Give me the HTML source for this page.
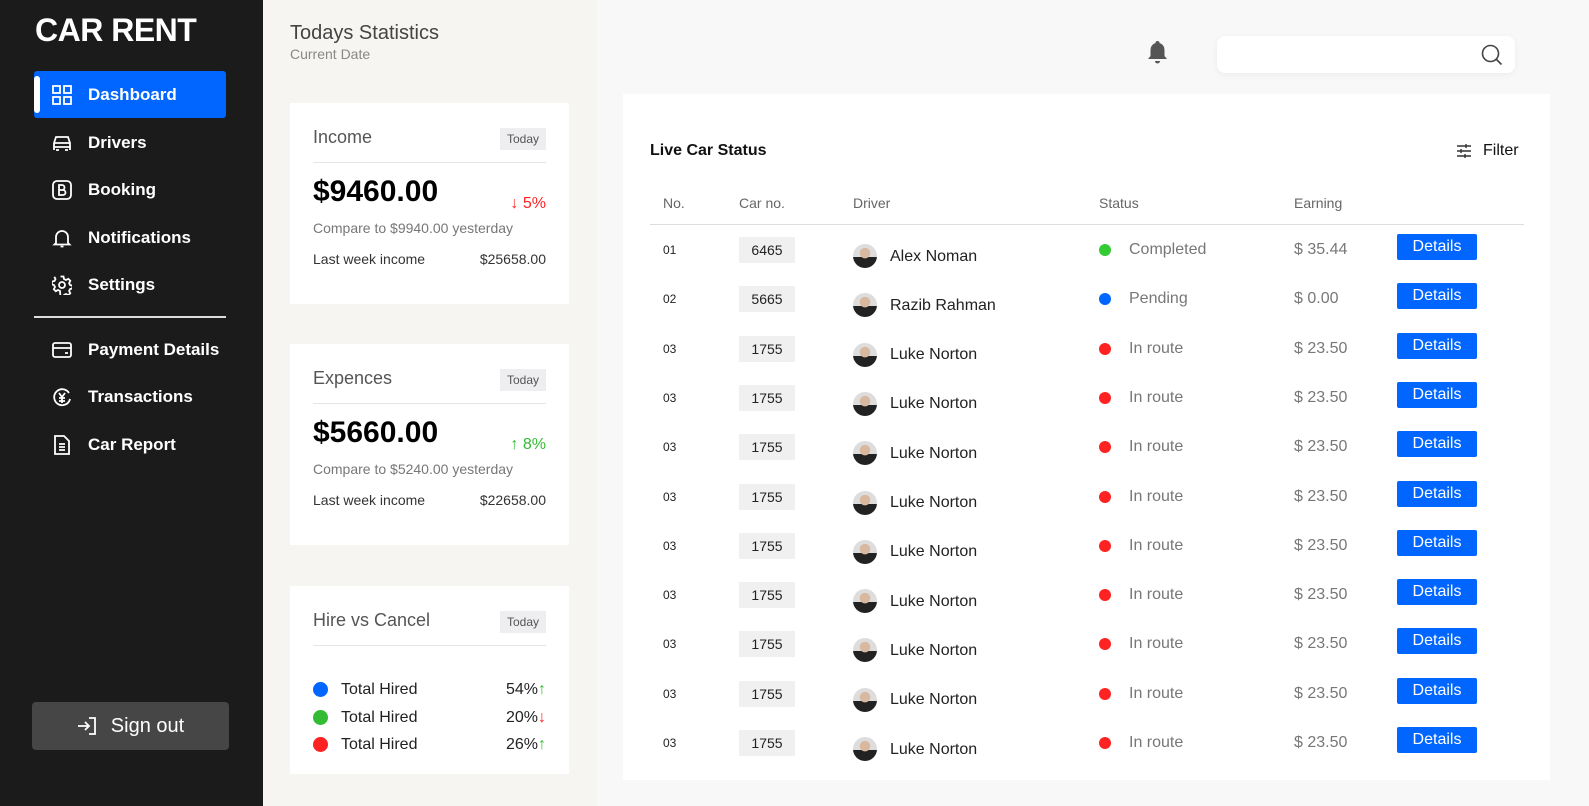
<!DOCTYPE html><html><head><meta charset="utf-8"><style>
*{margin:0;padding:0;box-sizing:border-box}
body{width:1589px;height:806px;overflow:hidden;font-family:"Liberation Sans",sans-serif;background:#f8f8f8;position:relative}
.sb{position:absolute;left:0;top:0;width:263px;height:806px;background:#1b1b1b;color:#fff}
.logo{position:absolute;left:35px;top:12px;font-size:32px;font-weight:bold;letter-spacing:-0.5px}
.nav{position:absolute;left:34px;width:192px;height:47px;font-size:17px;font-weight:bold;display:flex;align-items:center;padding-left:18px}
.nav svg{width:20px;height:20px;margin-right:16px;fill:none;stroke:#fff;stroke-width:1.8}
.act{background:#0066ff;border-radius:3px}
.act:before{content:"";position:absolute;left:0;top:5px;width:6px;height:37px;background:#fff;border-radius:3px}
.mid{position:absolute;left:263px;top:0;width:334px;height:806px;background:#f6f5f1}
.card{position:absolute;left:290px;width:279px;background:#fff;padding:0 23px}
.ct{font-size:18px;color:#555;position:absolute;left:23px;top:24px}
.tag{position:absolute;right:23px;top:25px;background:#eeeef0;color:#555;font-size:12px;padding:4px 7px}
.hr{position:absolute;left:23px;right:23px;top:59px;border-top:1px solid #e5e5e5}
.big{position:absolute;left:23px;top:72px;font-size:30px;font-weight:bold}
.cmp{position:absolute;left:23px;top:117px;font-size:14px;color:#777}
.lw{position:absolute;left:23px;right:23px;top:148px;font-size:14px;color:#333;display:flex;justify-content:space-between}
.pct{position:absolute;right:23px;top:92px;font-size:16px}
.main{position:absolute;left:623px;top:94px;width:927px;height:686px;background:#fff}
.row{position:absolute;left:0;width:927px;height:30px;font-size:16px;color:#222}
.row>*{position:absolute;top:50%;transform:translateY(-50%)}
.cn{left:116px;background:#f0f0f0;font-size:14px;padding:5px 0;width:56px;text-align:center}
.av{left:230px;width:24px;height:24px;border-radius:50%;background:radial-gradient(circle at 50% 38%,#d9b8a0 0 5px,transparent 5.5px),linear-gradient(#ddd 55%,#222 55%)}
.dot{left:476px;width:12px;height:12px;border-radius:50%}
.btn{left:774px;background:#0066ff;color:#fff;width:80px;height:26px;border-radius:2px;text-align:center;line-height:26px;font-size:16px}
</style></head><body>
<div class="sb">
<div class="logo">CAR RENT</div>
<div class="nav act" style="top:71px"><svg viewBox="0 0 20 20"><rect x="1" y="1" width="7" height="7"/><rect x="12" y="1" width="7" height="7"/><rect x="1" y="12" width="7" height="7"/><rect x="12" y="12" width="7" height="7"/></svg>Dashboard</div>
<div class="nav" style="top:119px"><svg viewBox="0 0 20 20"><path d="M2 17v-7l2-6h12l2 6v7M2 14h16M2 10h16M4 17h3M13 17h3"/></svg>Drivers</div>
<div class="nav" style="top:166px"><svg viewBox="0 0 20 20"><rect x="1" y="1" width="18" height="18" rx="4"/><path d="M7 5v10h4a2.5 2.5 0 0 0 0-5H7h3a2.5 2.5 0 0 0 0-5z"/></svg>Booking</div>
<div class="nav" style="top:214px"><svg viewBox="0 0 20 20"><path d="M4 15V9a6 6 0 0 1 12 0v6l1.5 1.5h-15zM8.5 18.5h3"/></svg>Notifications</div>
<div class="nav" style="top:261px"><svg viewBox="0 0 20 20"><circle cx="10" cy="10" r="3"/><path d="M8.5 1.5h3l.5 2.5 2 1 2.3-1.2 2 2-1.2 2.3 1 2 2.4.4v3l-2.4.5-1 2 1.2 2.2-2 2-2.3-1.2-2 1-.5 2.5h-3L8 16l-2-1-2.2 1.2-2-2L3 12l-1-2-2-.5v-3L2.5 6l1-2L2.3 1.8"/></svg>Settings</div>
<div style="position:absolute;left:34px;top:316px;width:192px;border-top:2px solid #ddd"></div>
<div class="nav" style="top:326px"><svg viewBox="0 0 20 20"><rect x="1" y="3" width="18" height="14" rx="2"/><path d="M1 8h18M13 13h3"/></svg>Payment Details</div>
<div class="nav" style="top:373px"><svg viewBox="0 0 20 20"><path d="M17 6a8 8 0 1 0 1 6M7 6l3 4 3-4M10 10v6M7 11h6M7 14h6"/></svg>Transactions</div>
<div class="nav" style="top:421px"><svg viewBox="0 0 20 20"><path d="M3 1h9l5 5v13H3zM7 9h6M7 12h6M7 15h6"/></svg>Car Report</div>
<div style="position:absolute;left:32px;top:702px;width:197px;height:48px;background:#464646;border-radius:4px;font-size:20px;display:flex;align-items:center;justify-content:center;color:#fff"><svg viewBox="0 0 20 20" width="20" height="20" style="margin-right:14px;fill:none;stroke:#fff;stroke-width:1.8"><path d="M1 10h11M8 6l4 4-4 4M12 2h6v16h-6"/></svg>Sign out</div>
</div>
<div class="mid"></div>
<div style="position:absolute;left:290px;top:22px;font-size:20px;color:#444">Todays Statistics</div>
<div style="position:absolute;left:290px;top:46px;font-size:14px;color:#888">Current Date</div>

<div class="card" style="top:103px;height:201px"><div class="ct">Income</div><div class="tag">Today</div><div class="hr"></div><div class="big">$9460.00</div><div class="pct" style="color:#f22">↓ 5%</div><div class="cmp">Compare to $9940.00 yesterday</div><div class="lw"><span>Last week income</span><span>$25658.00</span></div></div>
<div class="card" style="top:344px;height:201px"><div class="ct">Expences</div><div class="tag">Today</div><div class="hr"></div><div class="big">$5660.00</div><div class="pct" style="color:#3b3">↑ 8%</div><div class="cmp">Compare to $5240.00 yesterday</div><div class="lw"><span>Last week income</span><span>$22658.00</span></div></div>
<div class="card" style="top:586px;height:188px"><div class="ct">Hire vs Cancel</div><div class="tag">Today</div><div class="hr"></div>
<div style="position:absolute;left:23px;right:23px;top:90px;font-size:16px;color:#222;line-height:27.5px">
<div style="display:flex;align-items:center"><span style="width:15px;height:15px;border-radius:50%;background:#0066ff;margin-right:13px"></span>Total Hired<span style="margin-left:auto">54%<b style="color:#3b3;font-weight:normal">↑</b></span></div>
<div style="display:flex;align-items:center"><span style="width:15px;height:15px;border-radius:50%;background:#3b3;margin-right:13px"></span>Total Hired<span style="margin-left:auto">20%<b style="color:#f22;font-weight:normal">↓</b></span></div>
<div style="display:flex;align-items:center"><span style="width:15px;height:15px;border-radius:50%;background:#f22;margin-right:13px"></span>Total Hired<span style="margin-left:auto">26%<b style="color:#3b3;font-weight:normal">↑</b></span></div>
</div></div>

<svg style="position:absolute;left:1146px;top:40px" width="23" height="24" viewBox="0 0 23 24"><path d="M11.5 1a2 2 0 0 1 2 2a7 7 0 0 1 5 7v6l2.5 3H2l2.5-3v-6a7 7 0 0 1 5-7a2 2 0 0 1 2-2zM9 21h5a2.5 2.5 0 0 1-5 0z" fill="#555"/></svg>
<div style="position:absolute;left:1217px;top:36px;width:298px;height:37px;background:#fff;border-radius:8px;box-shadow:0 2px 8px rgba(0,0,0,.05)"><svg style="position:absolute;right:12px;top:8px" width="22" height="22" viewBox="0 0 22 22" fill="none" stroke="#444" stroke-width="1.6"><circle cx="9.5" cy="9.5" r="8"/><path d="M15.5 15.5l5 5"/></svg></div>

<div class="main">
<div style="position:absolute;left:27px;top:48px;font-size:16px;font-weight:bold;color:#111">Live Car Status</div>
<svg style="position:absolute;left:833px;top:49px" width="16" height="16" viewBox="0 0 16 16" fill="none" stroke="#333" stroke-width="1.4"><path d="M1 3h14M1 8h14M1 13h14M10 1v4M5 6v4M9 11v4"/></svg>
<div style="position:absolute;left:860px;top:48px;font-size:16px;color:#111">Filter</div>
<div style="position:absolute;top:101px;font-size:14px;color:#666;left:40px">No.</div>
<div style="position:absolute;top:101px;font-size:14px;color:#666;left:116px">Car no.</div>
<div style="position:absolute;top:101px;font-size:14px;color:#666;left:230px">Driver</div>
<div style="position:absolute;top:101px;font-size:14px;color:#666;left:476px">Status</div>
<div style="position:absolute;top:101px;font-size:14px;color:#666;left:671px">Earning</div>
<div style="position:absolute;left:27px;top:130px;width:874px;border-top:1px solid #ddd"></div>
<div id="rows"></div>
</div>
<script>
var d=[["01","6465","Alex Noman","#3c3","Completed","$ 35.44"],["02","5665","Razib Rahman","#0066ff","Pending","$ 0.00"]];
for(var i=0;i<9;i++)d.push(["03","1755","Luke Norton","#f22","In route","$ 23.50"]);
var h="";d.forEach(function(r,i){var t=250+i*49.3-94-15;
h+='<div class="row" style="top:'+t+'px"><span style="left:40px;font-size:12px">'+r[0]+'</span><span class="cn">'+r[1]+'</span><span class="av" style="top:70%"></span><span style="left:267px;top:72%">'+r[2]+'</span><span class="dot" style="background:'+r[3]+'"></span><span style="left:506px;color:#777">'+r[4]+'</span><span style="left:671px;color:#777">'+r[5]+'</span><span class="btn" style="top:40%">Details</span></div>';});
document.getElementById("rows").innerHTML=h;
</script>
</body></html>
